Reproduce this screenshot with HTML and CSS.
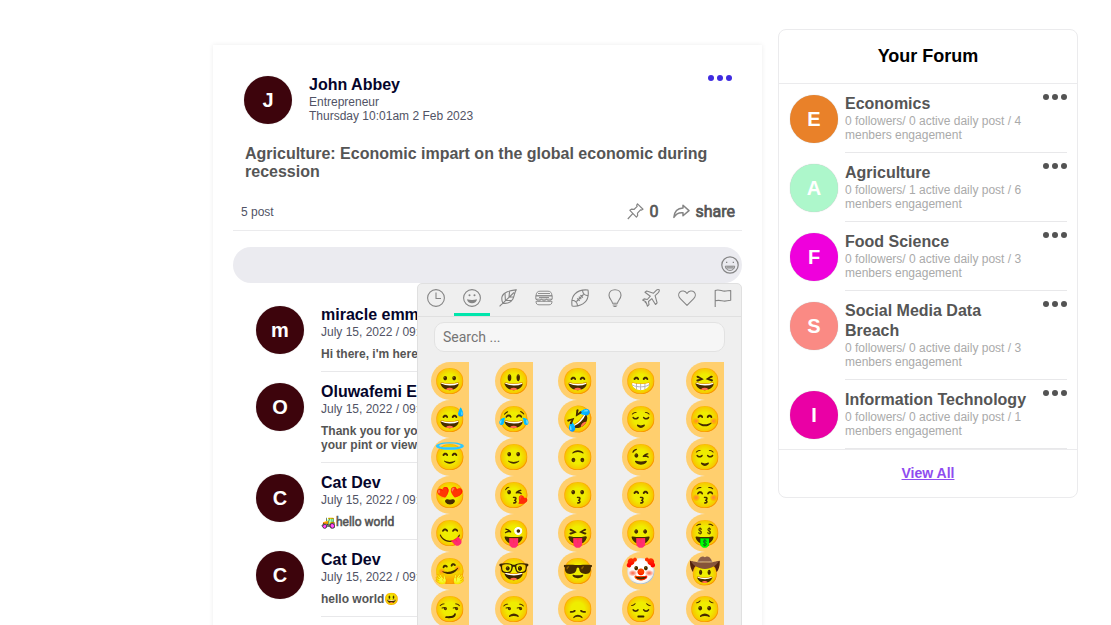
FILE: index.html
```html
<!DOCTYPE html>
<html lang="en">
<head>
<meta charset="utf-8">
<title>Forum</title>
<link rel="stylesheet" href="styles.css">
</head>
<body>
<div class="layout">
  <main class="post">
    <header class="post-header">
      <div class="avatar">J</div>
      <div class="author">
        <h1 class="name">John Abbey</h1>
        <p class="meta">Entrepreneur</p>
        <p class="meta">Thursday 10:01am 2 Feb 2023</p>
      </div>
      <div class="dots dots-blue"><i></i><i></i><i></i></div>
    </header>
    <h2 class="title">Agriculture: Economic impart on the global economic during recession</h2>
    <div class="stats">
      <span class="count">5 post</span>
      <div class="actions">
        <span class="action pin">
          <svg width="17" height="17" viewBox="0 0 17 17"><path d="M10.500.9l5.500 5.300-1.500.9-1-.2-3 3.200.1 2.600-1.200 1.400L2.900 7.300l1.500-1.200 2.800.2 3-2.900-.5-1zM5.700 10.700L.8 16"/></svg>0</span>
        <span class="action share">
          <svg width="17" height="15" viewBox="0 0 17 15"><path d="M10 1.200l6 5.400-6 5.200V8.800C5.500 8.300 3 9.800.9 13.400 1.300 8 4.500 4.400 10 4.100z" stroke-width="1.5"/></svg>share</span>
      </div>
    </div>
    <div class="composer">
      <svg width="18" height="18" viewBox="0 0 18 18"><circle cx="9" cy="9" r="8.200"/><path d="M4.300 10.200h9.400c-.3 2.700-2 4.200-4.700 4.200s-4.400-1.500-4.700-4.200zM4.800 12h8.400M7 10.400v1.500M9 10.400v1.500M11 10.400v1.500" stroke-width="1"/><path class="fill" d="M5 5.800h1.300v1.300H5zM11.700 5.800H13v1.300h-1.300z"/></svg>
      <section class="picker">
        <nav class="tabs">
          <span class="tab"><svg viewBox="0 0 18 18"><circle cx="9" cy="9" r="8.400"/><path d="M9 3.500V9.500h5"/></svg></span>
          <span class="tab active"><svg viewBox="0 0 18 18"><circle cx="9" cy="9" r="8.400"/><path class="fill" d="M4 10.200c3.500 1 6.500 1 10 0-.4 2.700-2.300 4-5 4s-4.600-1.300-5-4z"/><circle class="fill" cx="6.500" cy="6.200" r="1"/><circle class="fill" cx="11.500" cy="6.200" r="1"/></svg></span>
          <span class="tab"><svg viewBox="0 0 18 18"><path d="M17.300.8C11 1.800 5 2.600 3.200 7.200c-.8 2.200-.4 4.600.7 7 4.700.6 8.200-.8 10-4.200C15.500 7 15.400 3.500 17.300.8zM.6 17.300C5 13 11 7.500 15 3.500M10.500 2.700L10 8.200l4.700-.4M6 4.200l.4 7.300 6.500-.1"/></svg></span>
          <span class="tab"><svg viewBox="0 0 18 18"><path d="M1 6.800C1.200 3.700 2.500 2.200 5 2.200h8c2.500 0 3.800 1.500 4 4.600zM.8 6.800h16.400v3.400H.8zM1 12.300h16c0 2.500-1 3.500-3 3.500H4c-2 0-3-1-3-3.500zM1 10.200l3 2 2.500-2 2.500 2 2.500-2 2.500 2 3-2M3 4.500h12M4 8.500h10" stroke-width=".9"/></svg></span>
          <span class="tab"><svg viewBox="0 0 18 18"><path d="M17 1c.8 5-.2 9.400-3 12.200C11.200 16 6.500 17.700 1.100 17 .3 12 1.300 7.600 4 4.900 6.800 2 11.500.4 17 1zM11.500 1.500c.3 2.800 2.300 4.800 5.200 5.100M1.300 11.300c2.900.3 4.900 2.300 5.200 5.200M5.500 12.500l7-7M6.200 9.300l2.500 2.500M7.800 7.700l2.500 2.500M9.400 6.100l2.500 2.500"/></svg></span>
          <span class="tab"><svg viewBox="0 0 18 18"><path d="M6.500 14.200C6.400 11.600 3 10 3 6.300 3 3 5.600.7 9 .7s6 2.300 6 5.600c0 3.700-3.400 5.300-3.500 7.900zM6.700 16h4.600M7.500 17.500h3"/></svg></span>
          <span class="tab"><svg viewBox="0 0 18 18"><path d="M17.200.8c-.9-.4-2.300-.1-3.200.8l-2.500 2.600L4.700 2 3 3.300l5.300 3.900-3 3.300-3.200-.6-1.500 1.200 3.200 1.600-.5.900.9-.1 1.300 3.700 1.500-1.500-.5-3.200 3.400-2.800 3.600 5.800 1.600-1.600-2-7.300 2.700-2.500c.9-.9 1.700-2.400 1.400-3.300z"/></svg></span>
          <span class="tab"><svg viewBox="0 0 18 18"><path d="M9 16.300L2.300 9.700C.3 7.700.2 4.900 1.800 3.200c2-2 5.300-1.500 7.200 1.300 1.900-2.800 5.200-3.300 7.200-1.300 1.600 1.700 1.500 4.500-.5 6.500z"/></svg></span>
          <span class="tab"><svg viewBox="0 0 18 18"><path d="M1.200 17.900V1.500c4-1.600 6.500.9 9.500.6 2.300-.1 4.200-.6 6-.6v9.800c-2 .4-4 .8-6 .8-3-.1-5.500-1.600-9.500-.3"/></svg></span>
        </nav>
        <div class="search">Search ...</div>
        <div class="emojis">
          <span><b>😀</b></span><span><b>😃</b></span><span><b>😄</b></span><span><b>😁</b></span><span><b>😆</b></span>
          <span><b>😅</b></span><span><b>😂</b></span><span><b>🤣</b></span><span><b>😌</b></span><span><b>😊</b></span>
          <span><b>😇</b></span><span><b>🙂</b></span><span><b>🙃</b></span><span><b>😉</b></span><span><b>😌</b></span>
          <span><b>😍</b></span><span><b>😘</b></span><span><b>😗</b></span><span><b>😙</b></span><span><b>😚</b></span>
          <span><b>😋</b></span><span><b>😜</b></span><span><b>😝</b></span><span><b>😛</b></span><span><b>🤑</b></span>
          <span><b>🤗</b></span><span><b>🤓</b></span><span><b>😎</b></span><span><b>🤡</b></span><span><b>🤠</b></span>
          <span><b>😏</b></span><span><b>😒</b></span><span><b>😞</b></span><span><b>😔</b></span><span><b>😟</b></span>
        </div>
      </section>
    </div>
    <div class="comments">
      <article class="comment">
        <div class="avatar">m</div>
        <div class="comment-body"><h3 class="name">miracle emm</h3><p class="meta">July 15, 2022 / 09:</p><p class="message">Hi there, i'm here</p></div>
      </article>
      <article class="comment">
        <div class="avatar">O</div>
        <div class="comment-body"><h3 class="name">Oluwafemi E</h3><p class="meta">July 15, 2022 / 09:</p><p class="message">Thank you for yo<br>your pint or view</p></div>
      </article>
      <article class="comment">
        <div class="avatar">C</div>
        <div class="comment-body"><h3 class="name">Cat Dev</h3><p class="meta">July 15, 2022 / 09:</p><p class="message alt"><span class="tractor">🚜</span>hello world</p></div>
      </article>
      <article class="comment">
        <div class="avatar">C</div>
        <div class="comment-body"><h3 class="name">Cat Dev</h3><p class="meta">July 15, 2022 / 09:</p><p class="message">hello world<span class="vivid">😃</span></p></div>
      </article>
    </div>
  </main>
  <aside class="forum">
    <h2 class="forum-title">Your Forum</h2>
    <div class="forum-item">
      <div class="avatar orange">E</div>
      <div class="forum-body"><div class="forum-text"><h3>Economics</h3><p>0 followers/ 0 active daily post / 4 menbers engagement</p></div><div class="dots"><i></i><i></i><i></i></div></div>
    </div>
    <div class="forum-item">
      <div class="avatar mint">A</div>
      <div class="forum-body"><div class="forum-text"><h3>Agriculture</h3><p>0 followers/ 1 active daily post / 6 menbers engagement</p></div><div class="dots"><i></i><i></i><i></i></div></div>
    </div>
    <div class="forum-item">
      <div class="avatar magenta">F</div>
      <div class="forum-body"><div class="forum-text"><h3>Food Science</h3><p>0 followers/ 0 active daily post / 3 menbers engagement</p></div><div class="dots"><i></i><i></i><i></i></div></div>
    </div>
    <div class="forum-item">
      <div class="avatar coral">S</div>
      <div class="forum-body"><div class="forum-text"><h3>Social Media Data Breach</h3><p>0 followers/ 0 active daily post / 3 menbers engagement</p></div><div class="dots"><i></i><i></i><i></i></div></div>
    </div>
    <div class="forum-item">
      <div class="avatar pink">I</div>
      <div class="forum-body"><div class="forum-text"><h3>Information Technology</h3><p>0 followers/ 0 active daily post / 1 menbers engagement</p></div><div class="dots"><i></i><i></i><i></i></div></div>
    </div>
    <div class="forum-footer"><a href="#">View All</a></div>
  </aside>
</div>
</body>
</html>
```
FILE: styles.css
```css
* { box-sizing: border-box; }
html, body { height: 100%; overflow: hidden; }
body { margin: 0; background: #fff; font-family: "Liberation Sans", Arial, sans-serif; }
h1, h2, h3, p { margin: 0; }
svg { fill: none; stroke: #858585; stroke-width: 1.2; stroke-linejoin: round; flex: none; }
svg .fill { fill: #858585; stroke: none; }

.layout { display: flex; align-items: flex-start; gap: 16px; padding: 29px 33px 0 213px; height: 625px; }
.post { width: 549px; height: 590px; margin-top: 16px; padding: 30px 20px 0; background: #fff; box-shadow: 0 0 5px rgba(0, 0, 0, .08); }

.avatar { flex: none; display: flex; align-items: center; justify-content: center; width: 48px; height: 48px; border-radius: 50%; background: #3d040c; color: #fff; font-size: 20px; font-weight: 700; box-shadow: 0 0 1px rgba(0, 0, 0, .3); }
.name { font-size: 16px; line-height: 20px; color: #05052b; white-space: nowrap; }
.meta { font-size: 12px; line-height: 14px; color: #515365; white-space: nowrap; }

.post-header { display: flex; height: 70px; padding: 0 10px 0 11px; }
.post-header .avatar { margin-top: 1px; }
.author { flex: 1; margin-left: 17px; }
.dots { display: flex; gap: 3px; flex: none; }
.dots i { width: 6px; height: 6px; border-radius: 50%; background: #535353; }
.dots-blue i { background: #3f2be0; }
.title { padding: 0 20px 0 12px; font-size: 16px; line-height: 18px; color: #555; }

.stats { display: flex; justify-content: space-between; height: 50px; padding: 19px 7px 0 8px; border-bottom: 1px solid #ebebed; }
.count { font-size: 12px; line-height: 24px; color: #515365; }
.actions { display: flex; gap: 15px; height: 24px; }
.action { display: flex; align-items: center; gap: 5px; font-family: Roboto, sans-serif; font-size: 16px; line-height: 24px; color: #555; -webkit-text-stroke: .7px #555; }
.action svg { margin-bottom: 2px; }

.composer { position: relative; display: flex; justify-content: flex-end; align-items: center; height: 36px; margin-top: 16px; padding-right: 3px; border-radius: 18px; background: #ebebf0; }

.picker { position: absolute; top: 36px; right: 0; width: 325px; height: 350px; overflow: hidden; border: 1px solid #e0e0e0; border-radius: 5px; background: #efefef; }
.tabs { display: flex; height: 33px; border-bottom: 1px solid #e0e0e0; }
.tab { flex: 1; height: 32px; padding-top: 5px; text-align: center; }
.tab.active { border-bottom: 3px solid #00e6ac; }
.tab svg { display: block; width: 18px; height: 18px; margin: 0 auto; stroke-width: 1.1; }
.search { height: 30px; margin: 5px 16px 10px; padding: 0 8px; border: 1px solid #e2e2e2; border-radius: 10px; background: #f6f6f6; font-family: Roboto, sans-serif; font-size: 14px; line-height: 28px; color: #757575; }
.emojis { display: grid; grid-template-columns: repeat(5, 38px); justify-content: space-between; grid-auto-rows: 38px; padding: 0 17px 0 12.8px; }
.emojis span { display: flex; align-items: center; justify-content: center; padding-left: 1px; border-radius: 19px 0 0 19px; background: #ffcf6e; font-family: "Noto Color Emoji", sans-serif; font-size: 25.5px; line-height: 38px; }
.emojis b { font-weight: 400; filter: hue-rotate(7deg) saturate(1.5); }
.vivid { display: inline-block; filter: hue-rotate(7deg) saturate(1.5); }
.tractor { display: inline-block; filter: hue-rotate(-85deg) saturate(1.8) brightness(1.15); }

.comments { padding: 12px 0 0 23px; }
.comment { display: flex; gap: 17px; }
.comment .avatar { margin-top: 11px; }
.comment-body { flex: 1; padding: 10px 0; border-bottom: 1px solid #e8e8ea; }
.message { height: 14px; margin-top: 8px; font-size: 12px; font-weight: 700; line-height: 14px; color: #555; }
.message:has(br) { height: 28px; }
.message.alt { font-family: Roboto, "Noto Color Emoji", sans-serif; font-weight: 400; -webkit-text-stroke: .55px #555; }

.forum { width: 300px; height: 469px; border: 1px solid #ebebed; border-radius: 8px; background: #fff; }
.forum-title { height: 54px; border-bottom: 1px solid #ebebed; font-size: 18px; line-height: 53px; text-align: center; color: #000; }
.forum-item { display: flex; gap: 7px; padding: 0 10px 0 11px; }
.forum-item .avatar { margin-top: 11px; }
.forum-body { flex: 1; display: flex; justify-content: space-between; padding: 10px 0; border-bottom: 1px solid #e8e8ea; }
.forum-text { width: 185px; }
.forum-text h3 { font-size: 16px; line-height: 20px; color: #555; }
.forum-text p { font-size: 12px; line-height: 14px; color: #aaa; }
.avatar.orange { background: #e98129; }
.avatar.mint { background: #adf7cb; }
.avatar.magenta { background: #ef00dc; }
.avatar.coral { background: #fa8a84; }
.avatar.pink { background: #ea00a5; }
.forum-footer { border-top: 1px solid #ebebed; font-size: 14px; font-weight: 700; line-height: 47px; text-align: center; }
.forum-footer a { color: #8f4cf0; }
```
